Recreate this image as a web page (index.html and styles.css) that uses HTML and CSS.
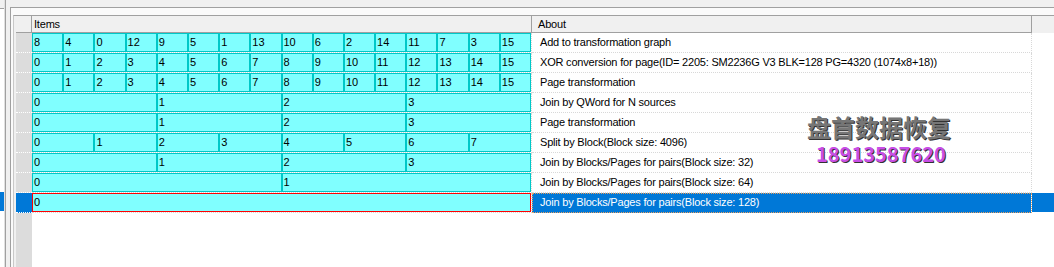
FILE: index.html
```html
<!DOCTYPE html>
<html lang="en">
<head>
  <meta charset="UTF-8" />
  <title>Transformation graph</title>
  <link rel="stylesheet" href="styles.css">
</head>
<body>
  <div class="window">
    <div class="side">
      <div class="side-head"></div>
      <div class="side-sel"></div>
    </div>
    <div class="split"></div>

    <div class="main">
      <div class="grid">
        <div class="head">
          <div class="corner"></div>
          <div class="hcell items-h">Items</div>
          <div class="hcell about-h">About</div>
          <div class="hrest"></div>
        </div>

        <div class="row">
          <div class="rh"></div>
          <div class="items">
            <span class="seg">8</span><span class="seg">4</span><span class="seg">0</span><span class="seg">12</span>
            <span class="seg">9</span><span class="seg">5</span><span class="seg">1</span><span class="seg">13</span>
            <span class="seg">10</span><span class="seg">6</span><span class="seg">2</span><span class="seg">14</span>
            <span class="seg">11</span><span class="seg">7</span><span class="seg">3</span><span class="seg">15</span>
          </div>
          <div class="about">Add to transformation graph</div>
          <div class="rest"></div>
        </div>

        <div class="row">
          <div class="rh"></div>
          <div class="items">
            <span class="seg">0</span><span class="seg">1</span><span class="seg">2</span><span class="seg">3</span>
            <span class="seg">4</span><span class="seg">5</span><span class="seg">6</span><span class="seg">7</span>
            <span class="seg">8</span><span class="seg">9</span><span class="seg">10</span><span class="seg">11</span>
            <span class="seg">12</span><span class="seg">13</span><span class="seg">14</span><span class="seg">15</span>
          </div>
          <div class="about">XOR conversion for page(ID= 2205: SM2236G V3 BLK=128 PG=4320 (1074x8+18))</div>
          <div class="rest"></div>
        </div>

        <div class="row">
          <div class="rh"></div>
          <div class="items">
            <span class="seg">0</span><span class="seg">1</span><span class="seg">2</span><span class="seg">3</span>
            <span class="seg">4</span><span class="seg">5</span><span class="seg">6</span><span class="seg">7</span>
            <span class="seg">8</span><span class="seg">9</span><span class="seg">10</span><span class="seg">11</span>
            <span class="seg">12</span><span class="seg">13</span><span class="seg">14</span><span class="seg">15</span>
          </div>
          <div class="about">Page transformation</div>
          <div class="rest"></div>
        </div>

        <div class="row">
          <div class="rh"></div>
          <div class="items">
            <span class="seg">0</span><span class="seg">1</span><span class="seg">2</span><span class="seg">3</span>
          </div>
          <div class="about">Join by QWord for N sources</div>
          <div class="rest"></div>
        </div>

        <div class="row">
          <div class="rh"></div>
          <div class="items">
            <span class="seg">0</span><span class="seg">1</span><span class="seg">2</span><span class="seg">3</span>
          </div>
          <div class="about">Page transformation</div>
          <div class="rest"></div>
        </div>

        <div class="row">
          <div class="rh"></div>
          <div class="items">
            <span class="seg">0</span><span class="seg">1</span><span class="seg">2</span><span class="seg">3</span>
            <span class="seg">4</span><span class="seg">5</span><span class="seg">6</span><span class="seg">7</span>
          </div>
          <div class="about">Split by Block(Block size: 4096)</div>
          <div class="rest"></div>
        </div>

        <div class="row">
          <div class="rh"></div>
          <div class="items">
            <span class="seg">0</span><span class="seg">1</span><span class="seg">2</span><span class="seg">3</span>
          </div>
          <div class="about">Join by Blocks/Pages for pairs(Block size: 32)</div>
          <div class="rest"></div>
        </div>

        <div class="row">
          <div class="rh"></div>
          <div class="items">
            <span class="seg">0</span><span class="seg">1</span>
          </div>
          <div class="about">Join by Blocks/Pages for pairs(Block size: 64)</div>
          <div class="rest"></div>
        </div>

        <div class="row sel">
          <div class="rh"></div>
          <div class="items">
            <span class="seg">0</span>
          </div>
          <div class="about">Join by Blocks/Pages for pairs(Block size: 128)</div>
          <div class="rest"></div>
        </div>

        <div class="filler">
          <div class="rh"></div>
          <div class="blank"></div>
        </div>
      </div>
    </div>

    <!-- watermark over the grid -->
    <div class="mark">
      <div class="mark-name">盘首数据恢复</div>
      <div class="mark-phone">18913587620</div>
    </div>
  </div>
</body>
</html>
```

FILE: styles.css
```css
body {
  margin: 0;
  background: #f0f0f0;
  font-family: "Liberation Sans", Arial, sans-serif;
  font-size: 11px;
  color: #000;
}
.window {
  position: relative;
  display: flex;
  height: 267px;
  overflow: hidden;
}
.side {
  width: 4px;
  background: #fff;
  border-right: 1px solid #e0e0e0;
  display: flex;
  flex-direction: column;
}
.side-head {
  height: 8px;
  background: #f0f0f0;
  border-bottom: 1px solid #a0a0a0;
}
.side-sel {
  margin-top: 183px;
  height: 19px;
  background: #0078d7;
}
.split {
  width: 4px;
  background: #f0f0f0;
  border-left: 1px solid #a0a0a0;
}
.main {
  flex: 1;
  margin-top: 7px;
  border-top: 1px solid #a0a0a0;
  border-left: 1px solid #a0a0a0;
  background: #fafafa;
  padding: 7px 0 0 2px;
  display: flex;
  flex-direction: column;
}
.grid {
  flex: 1;
  display: flex;
  flex-direction: column;
  border-top: 1px solid #a0a0a0;
  border-left: 1px solid #c8c8c8;
  padding-left: 2px;
  background: #f0f0f0;
}
.head {
  display: flex;
  height: 17px;
}
.corner {
  width: 16px;
  box-sizing: border-box;
  border-right: 1px solid #a0a0a0;
  border-bottom: 1px solid #a0a0a0;
}
.hcell {
  box-sizing: border-box;
  width: 500px;
  line-height: 16px;
  letter-spacing: -0.2px;
  border-right: 1px solid #a0a0a0;
  border-bottom: 1px solid #a0a0a0;
}
.items-h {
  padding-left: 2px;
}
.about-h {
  padding-left: 6px;
}
.hrest {
  flex: 1;
}
.row {
  display: flex;
  height: 20px;
  background: #fff;
}
.rh {
  width: 16px;
  box-sizing: border-box;
  background: #dcdcdc;
  border-bottom: 1px dotted #fff;
}
.items {
  display: flex;
  width: 500px;
  box-sizing: border-box;
  border-right: 1px dotted #d8d8d8;
  border-bottom: 1px dotted #d8d8d8;
}
.seg {
  flex: 1;
  min-width: 0;
  box-sizing: border-box;
  height: 19px;
  line-height: 17px;
  padding-left: 1px;
  background: #80ffff;
  border: 1px solid #00c8c8;
}
.about {
  width: 500px;
  box-sizing: border-box;
  padding-left: 8px;
  line-height: 19px;
  letter-spacing: -0.2px;
  white-space: nowrap;
  border-right: 1px dotted #d8d8d8;
  border-bottom: 1px dotted #d8d8d8;
}
.rest {
  flex: 1;
}
.row.sel .rh {
  background: #0078d7;
}
.row.sel .seg {
  border-color: #ff0000;
}
.row.sel .about {
  background: #0078d7;
  color: #fff;
  border-right: 1px solid #fff;
  outline: 1px dotted #e8a060;
  outline-offset: -1px;
}
.row.sel .rest {
  background: #0078d7;
  border-bottom: 1px solid #fff;
}
.filler {
  flex: 1;
  display: flex;
}
.filler .rh {
  border-bottom: none;
}
.blank {
  flex: 1;
  background: #fff;
}
.mark {
  position: absolute;
  left: 807px;
  top: 114px;
  font-family: "Noto Sans CJK SC", "Noto Sans", sans-serif;
  font-weight: bold;
}
.mark-name {
  font-size: 24px;
  line-height: 26px;
  color: #767676;
  text-shadow: 1px 1px 0 #333;
}
.mark-phone {
  font-size: 20px;
  line-height: 22px;
  margin-top: 3px;
  margin-left: 9px;
  color: #c84ee6;
  text-shadow: 1px 1px 0 #333;
}
```
